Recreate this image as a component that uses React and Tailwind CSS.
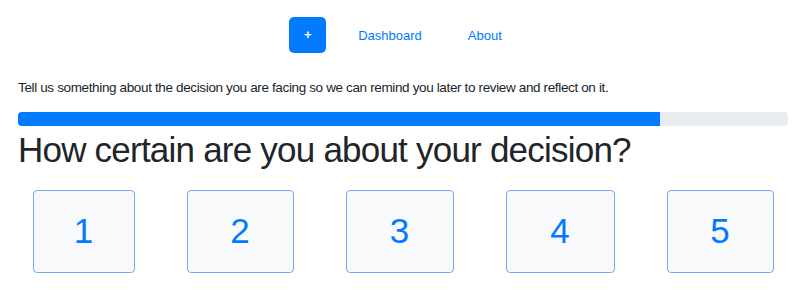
import { useState } from 'react';

const opciones = [
  { valor: 1, ancho: 'w-[102px]' },
  { valor: 2, ancho: 'w-[107px]' },
  { valor: 3, ancho: 'w-[108px]' },
  { valor: 4, ancho: 'w-[109px]' },
  { valor: 5, ancho: 'w-[107px]' },
];

const App = () => {
  const [elegido, setElegido] = useState(null);

  return (
    <div className="min-h-screen bg-white text-[#212529] font-['Liberation_Sans',Arial,sans-serif]">
      <nav className="flex items-center justify-center pt-[17px] pr-[15px] h-[53px]">
        <button
          type="button"
          className="flex h-[36px] w-[37px] items-center justify-center rounded-[5px] bg-[#007bff] text-[13px] font-bold text-white"
        >
          +
        </button>
        <a href="#" className="ml-[32px] mt-[1px] text-[13px] text-[#007bff]">Dashboard</a>
        <a href="#" className="ml-[46px] mt-[1px] text-[13px] text-[#007bff]">About</a>
      </nav>

      <div className="px-[18px]">
        <p className="mt-[27px] text-[13.5px] leading-[16px] tracking-[-0.36px]">
          Tell us something about the decision you are facing so we can remind you later to review and reflect on it.
        </p>

        <div className="mt-[16px] h-[14px] w-full overflow-hidden rounded-[4px] bg-[#e9ecef]">
          <div className="h-full w-[83.4%] bg-[#007bff]" />
        </div>

        <h1 className="mt-[3px] text-[35px] leading-[42px] font-normal tracking-[-0.78px]">
          How certain are you about your decision?
        </h1>
      </div>

      <div className="mt-[19px] flex justify-center gap-[52px]">
        {opciones.map((o) => (
          <button
            key={o.valor}
            type="button"
            onClick={() => setElegido(o.valor)}
            className={`${o.ancho} flex h-[83px] items-center justify-center rounded-[4px] border border-[#72acf6] text-[35px] text-[#007bff] ${elegido === o.valor ? 'bg-[#e7f1ff]' : 'bg-[#f8f9fa]'}`}
          >
            {o.valor}
          </button>
        ))}
      </div>
    </div>
  );
};

export default App;
